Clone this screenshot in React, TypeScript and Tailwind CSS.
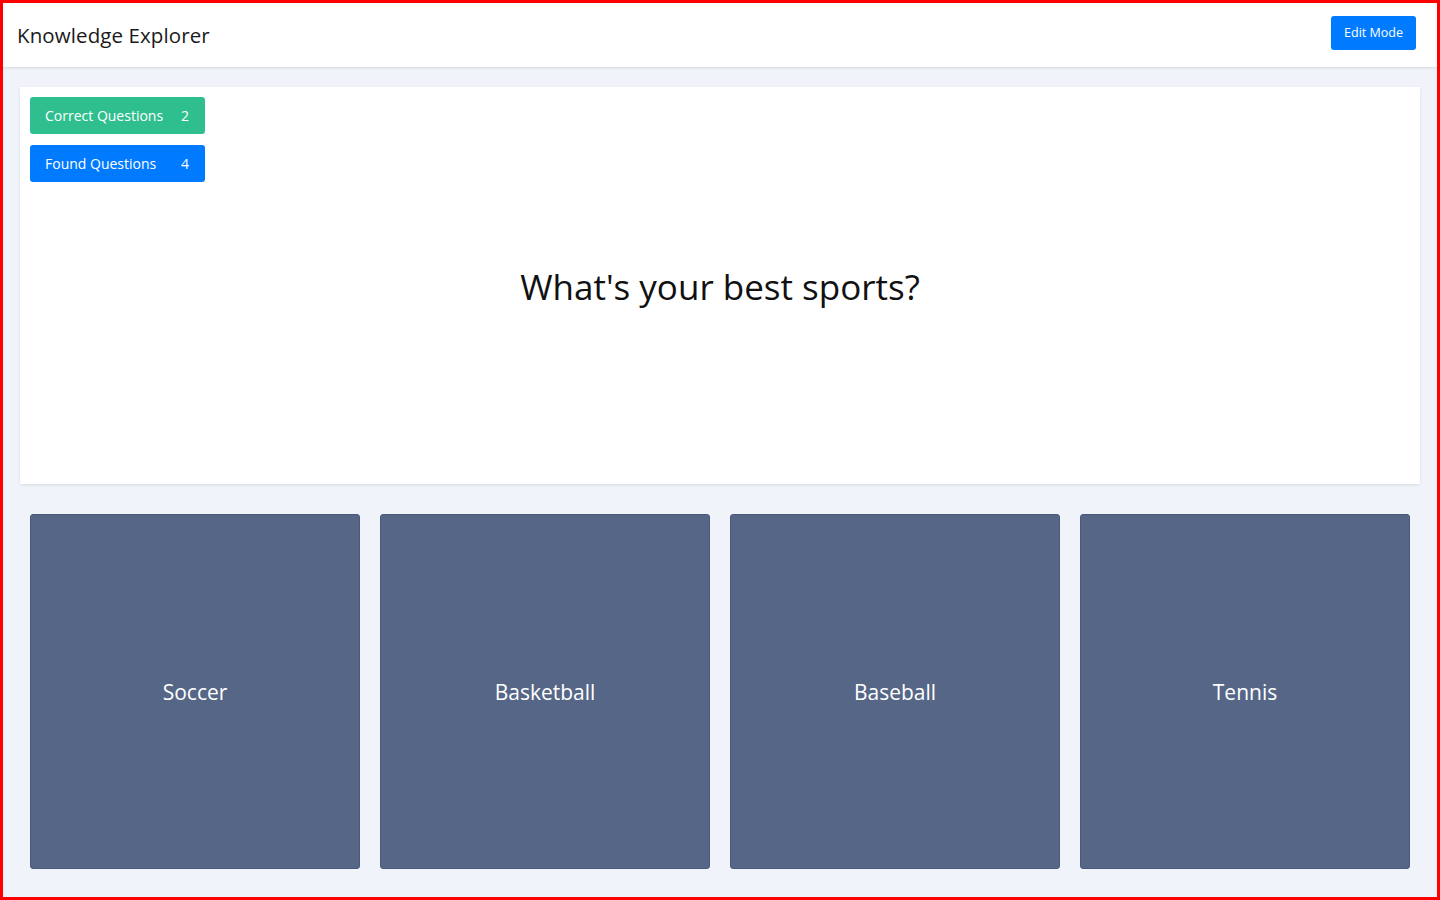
const answers = ['Soccer', 'Basketball', 'Baseball', 'Tennis'];

function CountBadge({ label, count, color }: { label: string; count: number; color: string }) {
  return (
    <div className={`flex h-[37px] w-[175px] items-center justify-between rounded-[3px] px-[15px] text-[14px] text-white ${color}`}>
      <span>{label}</span>
      <span className="pr-[1px]">{count}</span>
    </div>
  );
}

export default function App() {
  return (
    <div
      className="flex h-screen w-full flex-col border-[3px] border-[#ff0000] bg-[#f0f3fa] text-[#1a1a1a]"
      style={{ fontFamily: '"Open Sans", "Noto Sans", sans-serif' }}
    >
      {/* header */}
      <header className="flex h-[65px] shrink-0 items-center justify-between border-b border-[#dde1e8] bg-white pl-[14px] pr-[21px] shadow-[0_1px_2px_rgba(0,0,0,0.06)]">
        <h1 className="text-[20.5px] font-normal tracking-[0.1px]">Knowledge Explorer</h1>
        <button className="mb-[4px] flex h-[34px] w-[85px] items-center justify-center rounded-[3px] bg-[#007bff] text-[12.5px] text-white">
          Edit Mode
        </button>
      </header>

      <main className="flex flex-1 flex-col px-[17px] pt-[19px]">
        {/* question card */}
        <section className="flex h-[397px] shrink-0 flex-col bg-white px-[10px] pt-[10px] shadow-[0_1px_3px_rgba(0,0,0,0.1)]">
          <div className="flex flex-col gap-[11px]">
            <CountBadge label="Correct Questions" count={2} color="bg-[#2fbf8f]" />
            <CountBadge label="Found Questions" count={4} color="bg-[#007bff]" />
          </div>
          <div className="flex justify-center pt-[79px]">
            <h2 className="text-[35px] font-normal text-[#111]">What's your best sports?</h2>
          </div>
        </section>

        {/* answers */}
        <div className="mt-[30px] grid flex-1 grid-cols-4 gap-5 px-[10px] pb-[28px]">
          {answers.map((a) => (
            <button
              key={a}
              className="flex items-center justify-center rounded-[3px] border border-[#4a5a7b] bg-[#566687] pt-[3px] text-[21px] text-white"
            >
              {a}
            </button>
          ))}
        </div>
      </main>
    </div>
  );
}
